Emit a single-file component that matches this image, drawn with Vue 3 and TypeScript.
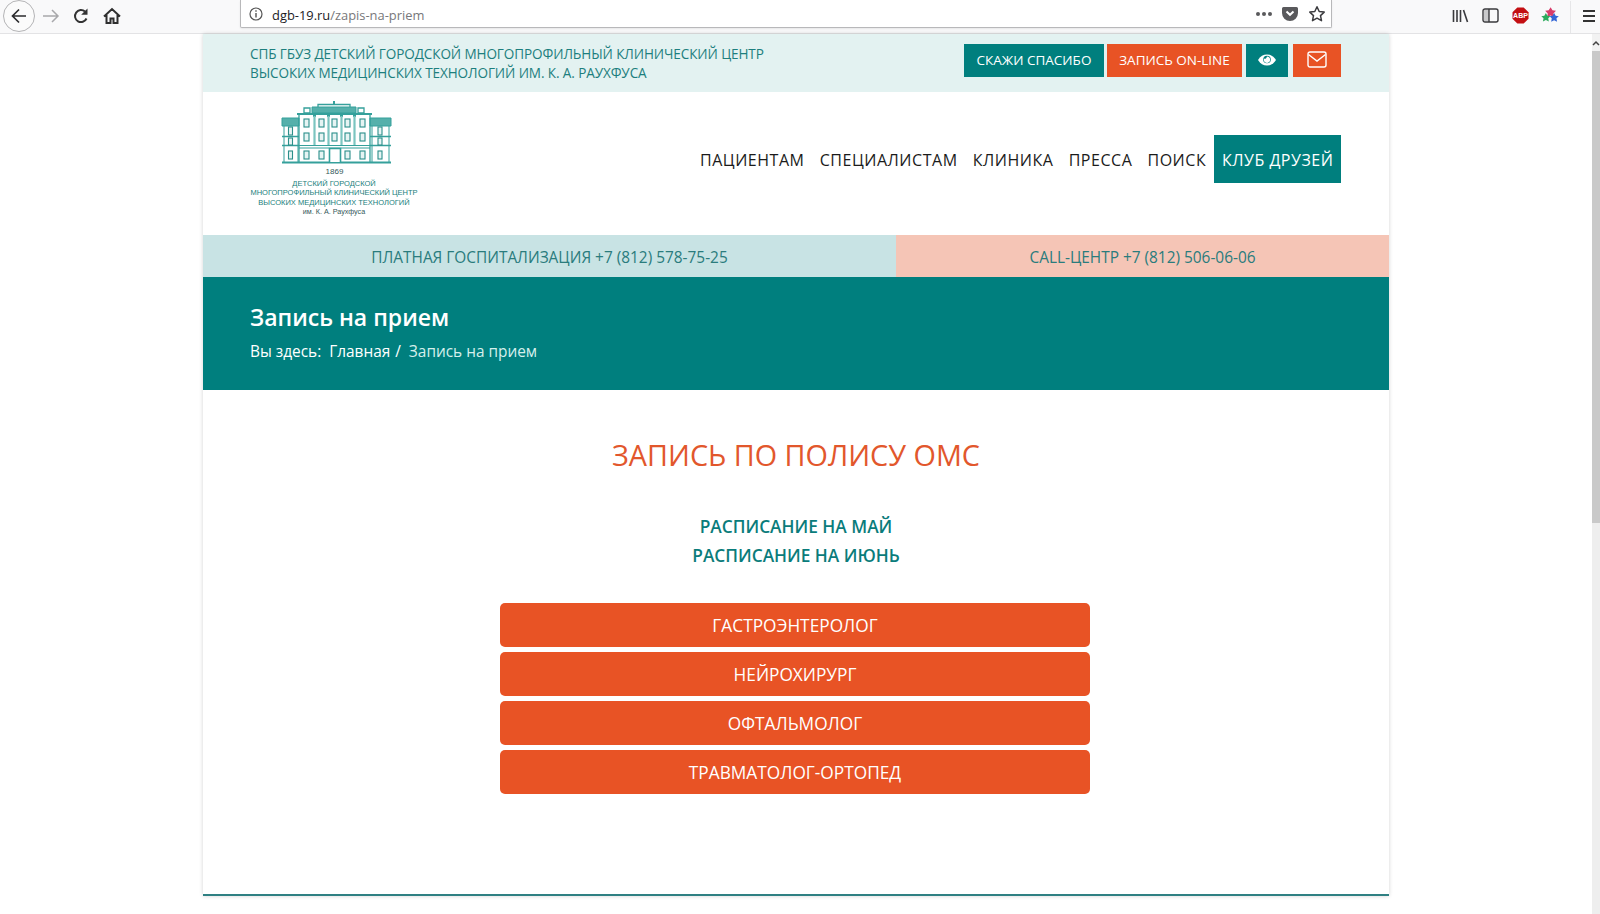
<template>
  <div class="window">
    <header class="toolbar">
      <div class="nav-tools">
        <span class="back">
          <svg width="20" height="20" viewBox="0 0 20 20"><path d="M17 10H3.500M10 3.500 3.500 10l6.500 6.500" fill="none" stroke="#2b2b2e" stroke-width="1.700" /></svg>
        </span>
        <svg class="forward" width="18" height="18" viewBox="0 0 18 18"><path d="M1 9h15M10 3l6 6-6 6" fill="none" stroke="#a8a8ab" stroke-width="1.500" /></svg>
        <svg class="reload" width="18" height="18" viewBox="0 0 18 18"><path d="M14.500 11.500A6 6 0 1 1 13 4.600" fill="none" stroke="#333" stroke-width="2" /><path d="M15.500 1.500v6.300H9.200z" fill="#333" /></svg>
        <svg class="home" width="18" height="18" viewBox="0 0 18 18"><path d="M1 9.500 9 2l8 7.500M3.500 8v8h4v-4.500h3V16h4V8" fill="none" stroke="#2f2f2f" stroke-width="2" /></svg>
      </div>
      <div class="urlbar">
        <svg width="14" height="14" viewBox="0 0 14 14"><circle cx="7" cy="7" r="6" fill="none" stroke="#555" stroke-width="1.200" /><path d="M7 6v4.500M7 3.300v1.500" stroke="#555" stroke-width="1.400" /></svg>
        <span class="url"><b>dgb-19.ru</b>/zapis-na-priem</span>
        <span class="url-actions">
          <span class="dots"><i /><i /><i /></span>
          <svg width="18" height="16" viewBox="0 0 18 16"><path d="M2.500 1h13A1.500 1.500 0 0 1 17 2.500V7A8 8 0 0 1 1 7V2.500A1.500 1.500 0 0 1 2.500 1z" fill="#59595c" /><path d="m5.500 5.500 3.500 3.300 3.500-3.300" fill="none" stroke="#fff" stroke-width="2" /></svg>
          <svg width="18" height="18" viewBox="0 0 18 18"><path d="m9 1.800 2.200 4.700 5 .6-3.700 3.500 1 5.100L9 13.200 4.500 15.700l1-5.100L1.800 7.100l5-.6z" fill="none" stroke="#3c3c3f" stroke-width="1.500" stroke-linejoin="round" /></svg>
        </span>
      </div>
      <div class="browser-tools">
        <svg width="17" height="16" viewBox="0 0 17 16"><path d="M1.500 2v12M5 2v12M8.500 2v12M11.500 2l4 12" stroke="#3a3a3d" stroke-width="1.600" fill="none" /></svg>
        <svg width="17" height="15" viewBox="0 0 17 15"><rect x="1" y="1" width="15" height="13" rx="2" fill="none" stroke="#3a3a3d" stroke-width="1.400" /><rect x="2" y="2" width="5" height="11" fill="#c9c9cb" /><path d="M7 1v13" stroke="#3a3a3d" stroke-width="1.400" /></svg>
        <svg width="17" height="17" viewBox="0 0 17 17"><path d="M5.300 .5h6.400l4.800 4.800v6.400l-4.800 4.800H5.300L.5 11.700V5.300z" fill="#c30f12" /><text x="8.500" y="11" text-anchor="middle" class="abp">ABP</text></svg>
        <svg class="ext" width="20" height="20" viewBox="0 0 17 17"><path d="m9 1 1.600 2.700 3 .4-2.200 2.200.5 3L9 8 6.100 9.300l.5-3-2.200-2.200 3-.4z" fill="#d83c6a" /><path d="m5 6 1.300 2.300 2.600.4-1.900 1.800.5 2.600L5 11.900l-2.500 1.200.5-2.600-1.900-1.800 2.600-.4z" fill="#2cab5d" /><path d="m12 6 1.300 2.300 2.700.4-2 1.800.5 2.800L12 12.100l-2.500 1.200.5-2.800-2-1.800 2.700-.4z" fill="#3366d6" /></svg>
        <span class="tools-sep" />
        <svg class="burger" width="16" height="14" viewBox="0 0 16 14"><path d="M2 2h12M2 7h12M2 12h12" stroke="#333" stroke-width="2" /></svg>
      </div>
    </header>

    <div class="viewport">
      <main class="page">
        <section class="top-strip">
          <p class="org">
            СПБ ГБУЗ ДЕТСКИЙ ГОРОДСКОЙ МНОГОПРОФИЛЬНЫЙ КЛИНИЧЕСКИЙ ЦЕНТР<br>
            ВЫСОКИХ МЕДИЦИНСКИХ ТЕХНОЛОГИЙ ИМ. К. А. РАУХФУСА
          </p>
          <div class="top-actions">
            <a class="top-btn teal thanks">СКАЖИ СПАСИБО</a>
            <a class="top-btn orange online">ЗАПИСЬ ON-LINE</a>
            <a class="top-btn teal eye" aria-label="Версия для слабовидящих">
              <svg width="20" height="14" viewBox="0 0 20 14"><path d="M1 7c2.300-3.700 5.300-5.500 9-5.500S16.700 3.300 19 7c-2.300 3.700-5.300 5.500-9 5.500S3.300 10.700 1 7z" fill="#fff" /><circle cx="10" cy="6.500" r="3.800" fill="#007f7e" /><path d="M10 3.500a3.200 3.200 0 1 1-3 2c1 .8 2.500.2 3-2z" fill="#fff" /></svg>
            </a>
            <a class="top-btn orange mail" aria-label="Почта">
              <svg width="20" height="17" viewBox="0 0 20 17"><rect x="1" y="1" width="18" height="15" rx="2" fill="none" stroke="#fff" stroke-width="1.400" /><path d="m1.500 3.500 8.500 6.500 8.500-6.500" fill="none" stroke="#fff" stroke-width="1.400" /></svg>
            </a>
          </div>
        </section>

        <section class="masthead">
          <div class="logo">
            <svg class="building" width="114" height="70" viewBox="0 0 114 70">
              <g fill="none" stroke="#35a09b" stroke-width="1">
                <!-- side wings -->
                <path d="M4 20h17v8H4zM92 20h21v8H92z" fill="#55b0ab" />
                <path d="M6 28v36M20 28v36M94 28v36M111 28v36" />
                <path d="M4 38.500h17M92 38.500h21M4 47.500h17M92 47.500h21" stroke-width="1.400" />
                <path d="M4 64.500h109" stroke-width="2" />
                <!-- main block -->
                <path d="M21 64V16h71v48" stroke-width="1.300" />
                <path d="M19 16h75" stroke-width="2.200" />
                <path d="M21 47.500h71M21 50h71" stroke-width="1.200" />
                <!-- roof and finial -->
                <path d="M34 9h44v6H34z" fill="#55b0ab" />
                <path d="M26 10h6v5h-6zM80 10h6v5h-6z" stroke-width="1.300" />
                <path d="M40 9V6.500h32V9" stroke-width="1.300" />
                <path d="M56 6.500V3" stroke-width="2" />
                <!-- columns -->
                <path d="M35 18h3M49 18h3M62 18h3M75 18h3" stroke-width="2" />
                <path d="M36.500 18v29M50.500 18v29M63.500 18v29M76.500 18v29" stroke-width="2.200" stroke="#7cc5c0" />
                <!-- door -->
                <path d="M51.500 64V50.500h11V64" fill="#fff" stroke-width="1.600" />
              </g>
              <g fill="#e6f4f3" stroke="#2b8f8a" stroke-width="1.100">
                <rect v-for="w in windows" :key="w.x + '-' + w.y" :x="w.x" :y="w.y" :width="w.w" :height="w.h" />
              </g>
            </svg>
            <div class="logo-year">1869</div>
            <div class="logo-name">
              ДЕТСКИЙ ГОРОДСКОЙ<br>
              МНОГОПРОФИЛЬНЫЙ КЛИНИЧЕСКИЙ ЦЕНТР<br>
              ВЫСОКИХ МЕДИЦИНСКИХ ТЕХНОЛОГИЙ<br>
              <span>им. К. А. Раухфуса</span>
            </div>
          </div>
          <nav class="menu">
            <a v-for="item in menu" :key="item" class="menu-item">{{ item }}</a>
            <a class="menu-item club">КЛУБ ДРУЗЕЙ</a>
          </nav>
        </section>

        <section class="phones">
          <div class="phone paid">ПЛАТНАЯ ГОСПИТАЛИЗАЦИЯ +7 (812) 578-75-25</div>
          <div class="phone call">CALL-ЦЕНТР +7 (812) 506-06-06</div>
        </section>

        <section class="banner">
          <h1>Запись на прием</h1>
          <div class="crumbs">
            <span>Вы здесь:</span>
            <a>Главная</a>
            <span class="slash">/</span>
            <span class="current">Запись на прием</span>
          </div>
        </section>

        <section class="content">
          <h2>ЗАПИСЬ ПО ПОЛИСУ ОМС</h2>
          <div class="schedules">
            <a v-for="s in schedules" :key="s">{{ s }}</a>
          </div>
          <div class="doctors">
            <a v-for="d in doctors" :key="d" class="doctor">{{ d }}</a>
          </div>
        </section>

        <div class="rule" />
      </main>

      <aside class="scrollbar">
        <div class="scroll-up">
          <svg width="8" height="6" viewBox="0 0 8 6"><path d="M1 5l3-3 3 3" fill="none" stroke="#444" stroke-width="1.500" /></svg>
        </div>
        <div class="scroll-thumb" />
      </aside>
    </div>
  </div>
</template>

<script setup lang="ts">
const menu: string[] = ['ПАЦИЕНТАМ', 'СПЕЦИАЛИСТАМ', 'КЛИНИКА', 'ПРЕССА', 'ПОИСК']
const schedules: string[] = ['РАСПИСАНИЕ НА МАЙ', 'РАСПИСАНИЕ НА ИЮНЬ']
const doctors: string[] = ['ГАСТРОЭНТЕРОЛОГ', 'НЕЙРОХИРУРГ', 'ОФТАЛЬМОЛОГ', 'ТРАВМАТОЛОГ-ОРТОПЕД']

interface Win {
  x: number
  y: number
  w: number
  h: number
}

// windows of the building, floor by floor
const windows: Win[] = [
  ...[26, 41, 54, 67, 82].flatMap((x) => [
    { x, y: 21, w: 5, h: 8 },
    { x, y: 35, w: 5, h: 8 },
  ]),
  ...[26, 41, 67, 82].map((x) => ({ x, y: 53, w: 5, h: 8 })),
  ...[10.5, 100].flatMap((x) => [
    { x, y: 29, w: 4, h: 8 },
    { x, y: 40, w: 4, h: 7 },
    { x, y: 53, w: 4, h: 8 },
  ]),
]
</script>

<style>
html,
body {
  margin: 0;
  background: #fff;
  overflow: hidden;
}
</style>

<style scoped>
.window {
  height: 914px;
  display: flex;
  flex-direction: column;
  overflow: hidden;
  font-family: "Open Sans", "Liberation Sans", sans-serif;
}

.toolbar {
  height: 33px;
  flex: none;
  display: flex;
  align-items: center;
  background: #f9f9fa;
  border-bottom: 1px solid #e3e3e5;
}

.nav-tools {
  width: 240px;
  flex: none;
  display: flex;
  align-items: center;
  padding: 0 0 2px 3px;
  box-sizing: border-box;
}

.back {
  width: 30px;
  height: 30px;
  border: 1px solid #b4b4b6;
  border-radius: 50%;
  background: #fbfbfb;
  display: flex;
  align-items: center;
  justify-content: center;
}

.forward {
  margin-left: 7px;
}

.reload {
  margin-left: 12px;
}

.home {
  margin-left: 13px;
}

.urlbar {
  width: 1092px;
  height: 28px;
  flex: none;
  margin-top: -5px;
  box-sizing: border-box;
  display: flex;
  align-items: center;
  padding: 1px 5px 0 8px;
  background: #fff;
  border: 1px solid #b8b8ba;
  border-top: 0;
  border-radius: 0 0 2px 2px;
  box-shadow: 0 1px 2px rgba(0, 0, 0, 0.08);
}

.url {
  margin: 2px 0 0 9px;
  font-size: 12.900px;
  color: #77777a;
}

.url b {
  font-weight: 400;
  color: #1c1c1f;
}

.url-actions {
  margin-left: auto;
  display: flex;
  align-items: center;
  gap: 9px;
}

.dots {
  display: flex;
  gap: 2px;
}

.dots i {
  width: 4px;
  height: 4px;
  border-radius: 50%;
  background: #59595c;
}

.browser-tools {
  flex: 1;
  display: flex;
  align-items: center;
  padding: 0 0 2px 120px;
  gap: 13px;
  height: 100%;
  box-sizing: border-box;
}

.abp {
  font-family: "Liberation Sans", sans-serif;
  font-size: 7px;
  font-weight: 700;
  fill: #fff;
}

.ext {
  margin: 0 -1px 0 -2px;
}

.tools-sep {
  width: 1px;
  height: 32px;
  background: #e6e6e8;
  margin: 2px 0 0 -2px;
}

.burger {
  margin-left: -3px;
}

.viewport {
  flex: 1;
  min-height: 0;
  display: flex;
}

.page {
  width: 1186px;
  margin: 0 auto;
  flex: none;
  background: #fff;
  box-shadow: 0 0 4px rgba(0, 0, 0, 0.18);
  align-self: flex-start;
  color: #333;
}

.top-strip {
  height: 58px;
  box-sizing: border-box;
  display: flex;
  justify-content: space-between;
  align-items: flex-start;
  padding: 11px 48px 0 47px;
  background: #e3f2f1;
}

.org {
  margin: 0;
  font-size: 13.550px;
  line-height: 19px;
  letter-spacing: -0.1px;
  color: #1d7f7e;
}

.top-actions {
  display: flex;
  margin-top: -1px;
}

.top-btn {
  height: 33px;
  box-sizing: border-box;
  display: flex;
  align-items: center;
  justify-content: center;
  padding-bottom: 2px;
  font-size: 13.500px;
  color: #fff;
}

.teal {
  background: #007f7e;
}

.orange {
  background: #e85325;
}

.thanks {
  width: 140px;
}

.online {
  width: 135px;
  margin-left: 3px;
}

.eye {
  width: 42px;
  margin-left: 4px;
}

.mail {
  width: 48px;
  margin-left: 5px;
}

.masthead {
  height: 143px;
  box-sizing: border-box;
  display: flex;
  justify-content: space-between;
  padding: 0 48px 0 47px;
}

.logo {
  width: 170px;
  padding-top: 6px;
  text-align: center;
  font-family: "Liberation Sans", sans-serif;
  color: #1a807c;
}

.building {
  display: block;
  margin: 0 0 0 28px;
}

.logo-year {
  font-size: 8px;
  line-height: 10px;
  margin-top: -1px;
  margin-left: -1px;
  color: #34595a;
}

.logo-name {
  margin-top: 2px;
  margin-left: -2px;
  font-size: 7.500px;
  line-height: 9.400px;
  white-space: nowrap;
}

.logo-name span {
  color: #34595a;
  font-size: 7.200px;
}

.menu {
  display: flex;
  align-items: center;
  height: 96px;
  margin-top: 19px;
}

.menu-item {
  padding: 2px 7.600px 0;
  height: 48px;
  box-sizing: border-box;
  display: flex;
  align-items: center;
  font-size: 16px;
  letter-spacing: 0.53px;
  color: #1b1b1b;
}

.club {
  margin-left: 0.500px;
  background: #007f7e;
  color: #fff;
  white-space: nowrap;
}

.phones {
  display: flex;
  height: 42px;
}

.phone {
  display: flex;
  align-items: center;
  justify-content: center;
  padding-top: 2px;
  box-sizing: border-box;
  font-size: 15.400px;
  color: #2a7c7d;
}

.paid {
  width: 693px;
  background: #c8e3e4;
}

.call {
  flex: 1;
  background: #f5c5b6;
}

.banner {
  height: 113px;
  box-sizing: border-box;
  padding: 24px 48px 0 47px;
  background: #007f7e;
  color: #fff;
}

.banner h1 {
  margin: 0;
  font-size: 23px;
  line-height: 33px;
  font-weight: 600;
}

.crumbs {
  margin-top: 7px;
  display: flex;
  gap: 8px;
  font-size: 15.400px;
  line-height: 22px;
}

.slash {
  margin-left: -3px;
}

.current {
  color: #d5efec;
}

.content {
  height: 504px;
  box-sizing: border-box;
  padding-top: 45px;
  display: flex;
  flex-direction: column;
  align-items: center;
}

.content h2 {
  margin: 0;
  font-size: 28.800px;
  line-height: 40px;
  font-weight: 400;
  color: #e2572c;
}

.schedules {
  margin-top: 37px;
  display: flex;
  flex-direction: column;
  align-items: center;
  font-size: 17.300px;
  line-height: 29px;
  font-weight: 600;
  color: #0a7c7b;
}

.doctors {
  margin: 33px 2px 0 0;
  width: 590px;
  display: flex;
  flex-direction: column;
  gap: 5px;
}

.doctor {
  height: 44px;
  display: flex;
  align-items: center;
  justify-content: center;
  border-radius: 5px;
  background: #e85325;
  font-size: 17.300px;
  color: #fff;
}

.rule {
  height: 2px;
  background: #2f8082;
}

.scrollbar {
  width: 8px;
  flex: none;
  background: #eeeeee;
}

.scroll-up {
  height: 17px;
  background: #f2f2f2;
  display: flex;
  align-items: center;
  justify-content: center;
}

.scroll-thumb {
  height: 472px;
  background: #c9c9c9;
}
</style>
